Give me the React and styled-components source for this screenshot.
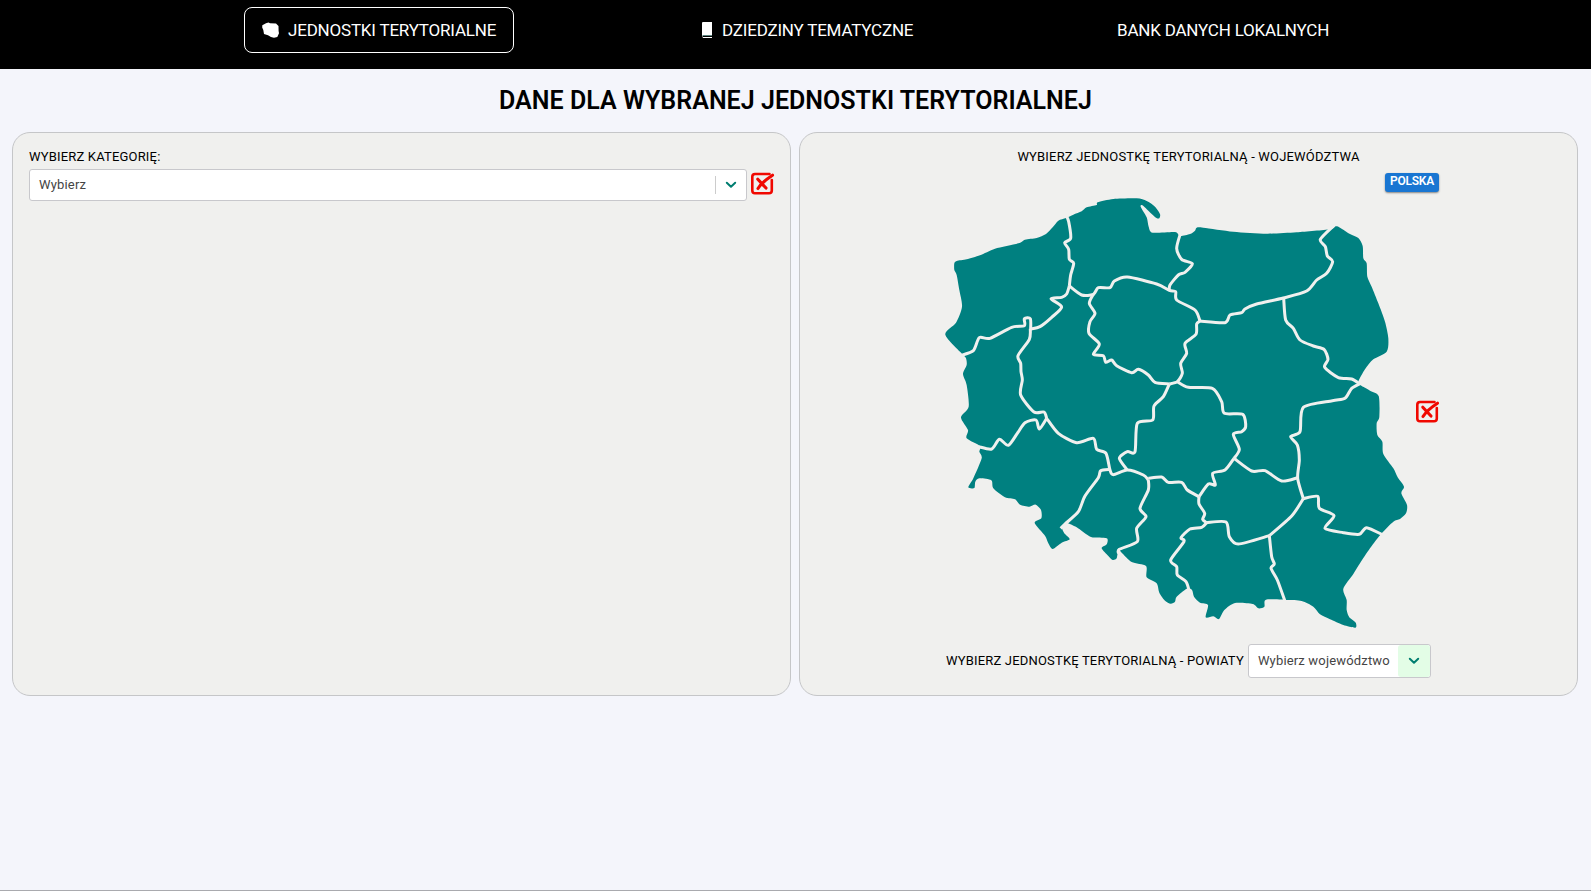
import React from "react";
import styled, { createGlobalStyle } from "styled-components";

const Global = createGlobalStyle`
  * { box-sizing: border-box; }
  body { margin: 0; background: #f4f5fb; font-family: Roboto, "Liberation Sans", sans-serif; color: #000; }
`;

const Page = styled.div`
  height: 891px;
  display: flex;
  flex-direction: column;
  border-bottom: 1px solid #a9aaae;
  overflow: hidden;
`;
const Header = styled.nav`
  height: 69px;
  background: #000;
  display: grid;
  grid-template-columns: 270px 402px 417px;
  column-gap: 0;
  padding: 7px 0 0 244px;
`;
const NavItem = styled.a`
  display: flex;
  align-items: center;
  height: 46px;
  width: ${(p) => p.$width}px;
  margin-left: ${(p) => p.$indent || 0}px;
  padding-left: ${(p) => p.$pad}px;
  gap: ${(p) => p.$gap || 0}px;
  border: 1px solid ${(p) => (p.$active ? "#fff" : "transparent")};
  border-radius: 8px;
  color: #fff;
  font-size: 17px;
  letter-spacing: -0.2px;
  white-space: nowrap;
`;
const Title = styled.h1`
  margin: 0;
  height: 63px;
  line-height: 64px;
  text-align: center;
  font-size: 25px;
  font-weight: 600;
  letter-spacing: 0.03px;
  white-space: nowrap;
`;
const Panels = styled.main`
  display: grid;
  grid-template-columns: 779px 779px;
  gap: 8px;
  padding-left: 12px;
  height: 564px;
`;
const Panel = styled.section`
  background: #f0f0ee;
  border: 1px solid #c5c6c8;
  border-radius: 18px;
  display: flex;
  flex-direction: column;
  padding: 15px 16px 0;
`;
const Label = styled.div`
  font-size: 13px;
  line-height: 18px;
  letter-spacing: 0.18px;
  white-space: nowrap;
  text-align: ${(p) => (p.$center ? "center" : "left")};
`;
const Row = styled.div`
  display: flex;
  align-items: center;
`;
const CategoryRow = styled(Row)`
  margin-top: 3px;
  gap: 4px;
`;
const Select = styled.div`
  flex: none;
  width: ${(p) => p.$width}px;
  height: ${(p) => p.$height}px;
  display: flex;
  align-items: center;
  background: #fff;
  border: 1px solid #c8c8cc;
  border-radius: 3px;
  font-size: 13px;
  letter-spacing: 0.17px;
  color: #444;
  padding-left: 9px;
  white-space: nowrap;
`;
const SelectText = styled.span`
  flex: 1;
  padding-bottom: 1px;
`;
const Arrow = styled.span`
  width: ${(p) => (p.$filled ? "32px" : "31px")};
  height: ${(p) => (p.$filled ? "100%" : "18px")};
  display: flex;
  align-items: center;
  justify-content: center;
  background: ${(p) => (p.$filled ? "#e3fde6" : "transparent")};
  border-left: ${(p) => (p.$filled ? "0" : "1px solid #ccc")};
  border-radius: ${(p) => (p.$filled ? "3px" : "0")};
`;
const ClearButton = styled.button`
  flex: none;
  width: 24px;
  height: 24px;
  border: 0;
  padding: 0;
  margin: ${(p) => p.$margin || "0 0 3px"};
  background: none;
  display: block;
`;
const PolskaRow = styled(Row)`
  height: 19px;
  margin-top: 7px;
  justify-content: flex-end;
  padding-right: 122px;
`;
const PolskaButton = styled.button`
  width: 54px;
  height: 19px;
  border: 0;
  border-radius: 3px;
  background: #1976d2;
  color: #fff;
  font: 600 12px/16px Roboto, sans-serif;
  letter-spacing: -0.2px;
  padding: 0 0 3px;
  box-shadow: 0 1px 2px rgba(0, 0, 0, 0.45);
`;
const MapRow = styled(Row)`
  height: 462px;
  align-items: flex-start;
  margin-top: -12px;
  padding-left: 114px;
`;
const CountyRow = styled(Row)`
  padding-left: 130px;
  gap: 4px;
  margin-top: 2px;
`;

const outline = [[46,464],[78,428],[96,380],[88,330],[80,285],[73,270],[73,250],[80,243],[110,238],[150,226],[195,206],[265,190],[285,179],[320,174],[348,162],[368,142],[385,122],[408,114],[430,104],[455,94],[470,82],[500,75],[503,67],[550,57],[620,55],[650,63],[675,80],[690,102],[688,115],[678,113],[655,92],[637,76],[632,80],[650,112],[656,140],[668,158],[735,156],[750,168],[780,162],[795,152],[800,143],[820,143],[910,155],[1010,161],[1100,157],[1200,148],[1217,139],[1230,143],[1260,162],[1285,174],[1298,198],[1300,235],[1310,250],[1312,290],[1325,320],[1345,370],[1365,425],[1375,475],[1370,515],[1330,538],[1305,568],[1285,605],[1292,616],[1320,632],[1346,648],[1348,710],[1340,730],[1342,765],[1357,785],[1360,822],[1390,865],[1403,892],[1422,920],[1414,940],[1431,975],[1428,1000],[1410,1017],[1390,1025],[1355,1060],[1320,1105],[1290,1150],[1270,1182],[1240,1226],[1250,1260],[1250,1290],[1258,1312],[1277,1328],[1276,1343],[1240,1335],[1200,1318],[1170,1303],[1150,1280],[1115,1263],[1070,1260],[1008,1259],[1003,1280],[985,1285],[968,1272],[915,1269],[883,1290],[867,1317],[850,1309],[827,1312],[834,1275],[810,1268],[792,1250],[786,1230],[770,1226],[740,1250],[735,1265],[722,1271],[705,1262],[688,1238],[680,1210],[650,1192],[648,1158],[605,1146],[575,1118],[565,1110],[560,1135],[548,1140],[535,1128],[515,1105],[530,1093],[530,1075],[483,1071],[440,1042],[410,1029],[396,1042],[403,1060],[419,1078],[395,1088],[368,1107],[355,1090],[345,1067],[314,1029],[334,1015],[333,990],[317,974],[298,980],[270,974],[255,958],[225,952],[190,925],[184,901],[148,895],[136,905],[133,924],[115,922],[130,895],[155,835],[148,815],[150,798],[110,775],[114,750],[93,712],[116,680],[110,615],[99,582],[110,555],[108,535],[98,523]];

const borders = [
  [[408,105],[416,125],[422,175],[404,188],[416,208],[418,238],[431,250],[422,285],[418,318]],
  [[418,318],[410,342],[395,352],[363,356],[395,381],[365,412],[330,440],[302,447]],
  [[302,447],[301,416],[283,416],[283,437],[245,442],[180,475],[148,473],[130,512],[94,526]],
  [[418,318],[455,345],[490,343],[505,323],[540,323],[553,303],[592,291],[680,312],[718,331],[737,335],[740,360],[795,390],[810,423]],
  [[752,158],[740,205],[755,238],[787,251],[765,277],[745,285],[720,315],[718,331]],
  [[810,423],[885,428],[900,405],[935,398],[945,387],[980,372],[1060,354],[1130,333],[1160,300],[1190,280],[1208,245],[1192,228],[1186,200],[1171,178],[1212,136]],
  [[1061,354],[1067,420],[1090,445],[1110,480],[1150,498],[1182,508],[1194,538],[1184,562],[1225,593],[1265,597],[1290,612]],
  [[490,343],[478,370],[495,400],[480,425],[477,460],[508,492],[490,523],[520,527],[527,547],[545,540],[560,557],[605,578],[625,568],[655,585],[675,607],[718,612]],
  [[810,423],[800,432],[798,463],[765,490],[770,520],[752,550],[757,580],[742,605],[718,612]],
  [[301,447],[298,478],[264,527],[272,550],[273,575],[277,600],[272,645],[312,696],[342,696],[350,715]],
  [[350,715],[328,747],[318,720],[285,728],[262,760],[235,796],[208,778],[185,807],[146,800]],
  [[350,715],[385,760],[440,788],[490,775],[500,808],[528,820],[540,870],[550,884],[592,870],[640,885],[655,900]],
  [[540,868],[512,872],[505,893],[465,948],[445,995],[405,1032],[392,1045]],
  [[718,612],[700,650],[672,678],[668,720],[622,730],[615,815],[592,815],[568,835],[592,870]],
  [[655,900],[655,930],[630,985],[648,1010],[620,1045],[622,1085],[568,1108],[566,1122]],
  [[655,895],[695,891],[715,907],[755,907],[772,930],[807,950]],
  [[807,950],[807,972],[824,1000],[818,1018],[830,1028]],
  [[830,1028],[815,1042],[780,1047],[753,1073],[762,1085],[722,1140],[740,1160],[742,1185],[768,1205],[778,1234]],
  [[830,1028],[888,1026],[898,1070],[925,1092],[1018,1067]],
  [[1018,1067],[1025,1130],[1033,1152],[1023,1165],[1042,1200],[1065,1264]],
  [[1018,1067],[1085,1008],[1120,956]],
  [[1120,956],[1163,949],[1168,985],[1212,1007],[1185,1045],[1240,1058],[1288,1063],[1310,1043],[1359,1065]],
  [[1290,611],[1265,625],[1245,655],[1207,662],[1120,682],[1110,755],[1082,770],[1102,795],[1108,840],[1103,895],[1120,956]],
  [[742,605],[775,622],[847,625],[875,665],[883,700],[938,703],[947,740],[935,755],[910,763],[928,808],[912,835]],
  [[912,835],[965,873],[1005,872],[1055,903],[1103,893]],
  [[912,835],[885,870],[848,880],[856,915],[835,912],[807,950]],
];

// Smooths a list of points into a cubic path that passes through each of them.
function curve(points, closed) {
  const n = points.length;
  const at = (i) => (closed ? points[(i + n) % n] : points[Math.max(0, Math.min(n - 1, i))]);
  const k = 0.13;
  let d = `M${points[0]}`;
  for (let i = 0; i < (closed ? n : n - 1); i++) {
    const [a, b, c, e] = [at(i - 1), at(i), at(i + 1), at(i + 2)];
    d += `C${b[0] + (c[0] - a[0]) * k} ${b[1] + (c[1] - a[1]) * k} ${c[0] - (e[0] - b[0]) * k} ${c[1] - (e[1] - b[1]) * k} ${c[0]} ${c[1]}`;
  }
  return d + (closed ? "Z" : "");
}

const PolandMap = () => (
  <svg width="484" height="450" viewBox="0 0 1452 1350">
    <path d={curve(outline, true)} fill="#008080" />
    {borders.map((b, i) => (
      <path key={i} d={curve(b, false)} fill="none" stroke="#f0f0ee" strokeWidth="9" strokeLinejoin="round" />
    ))}
  </svg>
);

const PolandIcon = () => (
  <svg width="18" height="16" viewBox="0 0 18 16">
    <path d="M.3 3.200 4 1.300 6.500.5 8 1.300 14 1.500 16.500 4 16.600 9 17 11.300 15.300 15 12 15.700 9 15 6 13.300 2 12 1.300 8 .2 5.500Z" fill="#fff" />
  </svg>
);
const BookIcon = () => (
  <svg width="10" height="16" viewBox="0 0 10 16">
    <path d="M1 0H10V13H0V1Q0 0 1 0Z" fill="#fff" />
    <path d="M0 13.500H10" stroke="#5b8580" />
    <path d="M0 13V14.500L1 15.500H10" fill="none" stroke="#fff" />
  </svg>
);
const Chevron = () => (
  <svg width="12" height="8" viewBox="0 0 12 8">
    <path d="M1.800 1.800 6 5.700 10.200 1.800" fill="none" stroke="#007d70" strokeWidth="2" strokeLinecap="round" strokeLinejoin="round" />
  </svg>
);
const ClearIcon = () => (
  <svg width="24" height="24" viewBox="0 0 24 24" fill="none" stroke="#f00800" strokeLinecap="round">
    <path d="M18.500 2H4Q1.300 2 1.300 4.800V18.500Q1.300 21.300 4 21.300H18Q20.800 21.300 20.800 18.500V8" strokeWidth="2.600" />
    <path d="M6.800 7.200 15 16M7 16.500Q11 10 21.500 3.200" strokeWidth="3.100" />
  </svg>
);

export default function App() {
  return (
    <Page>
      <Global />
      <Header>
        <NavItem $active $width={270} $pad={17} $gap={8}><PolandIcon />JEDNOSTKI TERYTORIALNE</NavItem>
        <NavItem $width={250} $indent={181} $pad={5.5} $gap={10.5}><BookIcon />DZIEDZINY TEMATYCZNE</NavItem>
        <NavItem $width={250} $indent={200} $pad={0}>BANK DANYCH LOKALNYCH</NavItem>
      </Header>
      <Title>DANE DLA WYBRANEJ JEDNOSTKI TERYTORIALNEJ</Title>
      <Panels>
        <Panel>
          <Label>WYBIERZ KATEGORIĘ:</Label>
          <CategoryRow>
            <Select $width={718} $height={32}>
              <SelectText>Wybierz</SelectText>
              <Arrow><Chevron /></Arrow>
            </Select>
            <ClearButton aria-label="Wyczyść kategorię"><ClearIcon /></ClearButton>
          </CategoryRow>
        </Panel>
        <Panel>
          <Label $center>WYBIERZ JEDNOSTKĘ TERYTORIALNĄ - WOJEWÓDZTWA</Label>
          <PolskaRow><PolskaButton>POLSKA</PolskaButton></PolskaRow>
          <MapRow>
            <PolandMap />
            <ClearButton aria-label="Wyczyść jednostkę" $margin="220px 0 0 2px"><ClearIcon /></ClearButton>
          </MapRow>
          <CountyRow>
            <Label>WYBIERZ JEDNOSTKĘ TERYTORIALNĄ - POWIATY</Label>
            <Select $width={183} $height={34}>
              <SelectText>Wybierz województwo</SelectText>
              <Arrow $filled><Chevron /></Arrow>
            </Select>
          </CountyRow>
        </Panel>
      </Panels>
    </Page>
  );
}
